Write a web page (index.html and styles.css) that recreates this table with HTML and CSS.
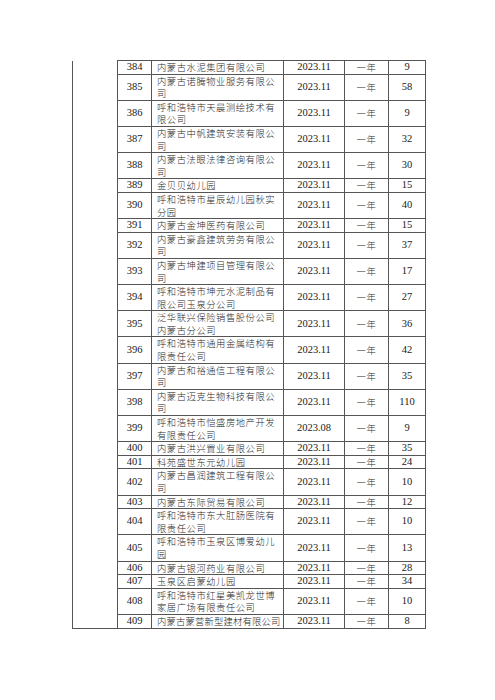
FILE: index.html
```html
<!DOCTYPE html>
<html lang="zh-CN">
<head>
<meta charset="utf-8">
<link rel="stylesheet" href="styles.css">
</head>
<body>
<table class="list">
<colgroup>
<col class="c-blank"><col class="c-no"><col class="c-name"><col class="c-date"><col class="c-term"><col class="c-count">
</colgroup>
<tbody>
<tr><td class="blank" rowspan="26"></td><td>384</td><td class="name">内蒙古水泥集团有限公司</td><td>2023.11</td><td class="cn">一年</td><td>9</td></tr>
<tr><td>385</td><td class="name">内蒙古诺腾物业服务有限公司</td><td>2023.11</td><td class="cn">一年</td><td>58</td></tr>
<tr><td>386</td><td class="name">呼和浩特市天晨测绘技术有限公司</td><td>2023.11</td><td class="cn">一年</td><td>9</td></tr>
<tr><td>387</td><td class="name">内蒙古中帆建筑安装有限公司</td><td>2023.11</td><td class="cn">一年</td><td>32</td></tr>
<tr><td>388</td><td class="name">内蒙古法眼法律咨询有限公司</td><td>2023.11</td><td class="cn">一年</td><td>30</td></tr>
<tr><td>389</td><td class="name">金贝贝幼儿园</td><td>2023.11</td><td class="cn">一年</td><td>15</td></tr>
<tr><td>390</td><td class="name">呼和浩特市星辰幼儿园秋实分园</td><td>2023.11</td><td class="cn">一年</td><td>40</td></tr>
<tr><td>391</td><td class="name">内蒙古金坤医药有限公司</td><td>2023.11</td><td class="cn">一年</td><td>15</td></tr>
<tr><td>392</td><td class="name">内蒙古豪鑫建筑劳务有限公司</td><td>2023.11</td><td class="cn">一年</td><td>37</td></tr>
<tr><td>393</td><td class="name">内蒙古坤建项目管理有限公司</td><td>2023.11</td><td class="cn">一年</td><td>17</td></tr>
<tr><td>394</td><td class="name">呼和浩特市坤元水泥制品有限公司玉泉分公司</td><td>2023.11</td><td class="cn">一年</td><td>27</td></tr>
<tr><td>395</td><td class="name">泛华联兴保险销售股份公司内蒙古分公司</td><td>2023.11</td><td class="cn">一年</td><td>36</td></tr>
<tr><td>396</td><td class="name">呼和浩特市通用金属结构有限责任公司</td><td>2023.11</td><td class="cn">一年</td><td>42</td></tr>
<tr><td>397</td><td class="name">内蒙古和裕通信工程有限公司</td><td>2023.11</td><td class="cn">一年</td><td>35</td></tr>
<tr><td>398</td><td class="name">内蒙古迈克生物科技有限公司</td><td>2023.11</td><td class="cn">一年</td><td>110</td></tr>
<tr><td>399</td><td class="name">呼和浩特市恺盛房地产开发有限责任公司</td><td>2023.08</td><td class="cn">一年</td><td>9</td></tr>
<tr><td>400</td><td class="name">内蒙古洪兴置业有限公司</td><td>2023.11</td><td class="cn">一年</td><td>35</td></tr>
<tr><td>401</td><td class="name">科苑盛世东元幼儿园</td><td>2023.11</td><td class="cn">一年</td><td>24</td></tr>
<tr><td>402</td><td class="name">内蒙古昌润建筑工程有限公司</td><td>2023.11</td><td class="cn">一年</td><td>10</td></tr>
<tr><td>403</td><td class="name">内蒙古东际贸易有限公司</td><td>2023.11</td><td class="cn">一年</td><td>12</td></tr>
<tr><td>404</td><td class="name">呼和浩特市东大肛肠医院有限责任公司</td><td>2023.11</td><td class="cn">一年</td><td>10</td></tr>
<tr><td>405</td><td class="name">呼和浩特市玉泉区博爱幼儿园</td><td>2023.11</td><td class="cn">一年</td><td>13</td></tr>
<tr><td>406</td><td class="name">内蒙古银河药业有限公司</td><td>2023.11</td><td class="cn">一年</td><td>28</td></tr>
<tr><td>407</td><td class="name">玉泉区启蒙幼儿园</td><td>2023.11</td><td class="cn">一年</td><td>34</td></tr>
<tr><td>408</td><td class="name">呼和浩特市红星美凯龙世博家居广场有限责任公司</td><td>2023.11</td><td class="cn">一年</td><td>10</td></tr>
<tr><td>409</td><td class="name oneline">内蒙古蒙营新型建材有限公司</td><td>2023.11</td><td class="cn">一年</td><td>8</td></tr>
</tbody>
</table>
</body>
</html>
```
FILE: styles.css
```css
html, body {
  margin: 0;
  padding: 0;
  background: #ffffff;
}
body {
  padding: 60px 0 0 72px;
  font-family: "Liberation Serif", "Noto Sans CJK SC", serif;
  color: #1a1a1a;
}
.list {
  border-collapse: collapse;
  table-layout: fixed;
  width: 353px;
}
.c-blank { width: 45px; }
.c-no { width: 34px; }
.c-name { width: 132px; }
.c-date { width: 61px; }
.c-term { width: 44px; }
.c-count { width: 37px; }
.list td {
  border: 1px solid #555555;
  padding: 0;
  font-size: 10.5px;
  line-height: 12.6px;
  text-align: center;
  vertical-align: middle;
}
.list td.blank {
  border-top: none;
}
.list td.name {
  font-family: "Noto Sans CJK SC", sans-serif;
  text-align: left;
  padding: 0 1px 0 5px;
  font-size: 9.3px;
  font-weight: 300;
  letter-spacing: 0.55px;
  color: #2a2a2a;
}
.list td.oneline {
  white-space: nowrap;
  letter-spacing: 0.2px;
  padding-right: 0;
}
.list td.cn {
  font-family: "Noto Sans CJK SC", sans-serif;
  font-size: 9.3px;
  font-weight: 300;
  letter-spacing: 0.8px;
  color: #2a2a2a;
}
```
